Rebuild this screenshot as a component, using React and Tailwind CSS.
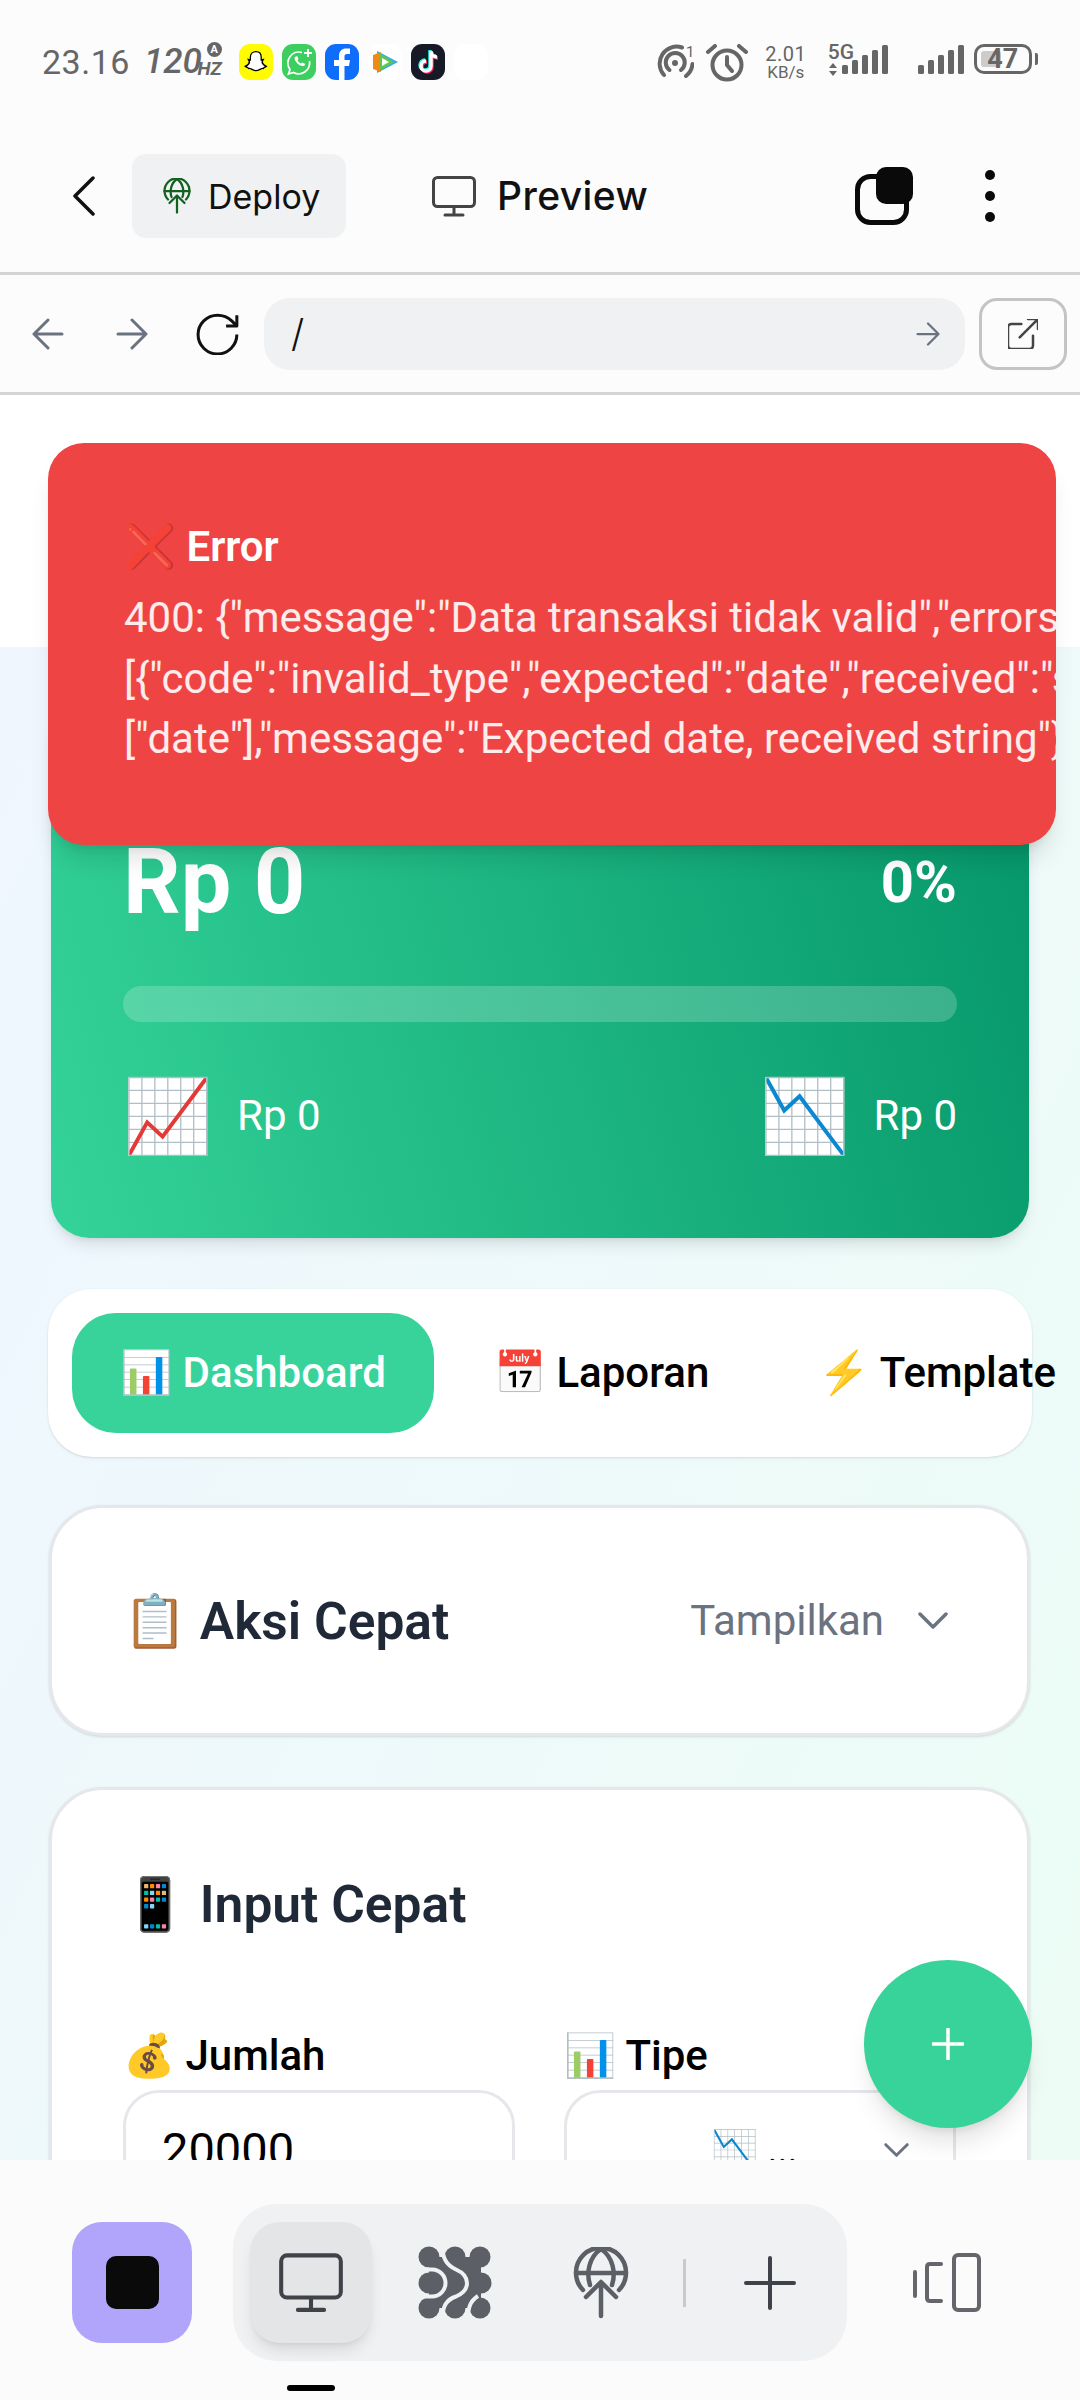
const AppTile = ({ className, children }) => (
  <div className={`flex h-[36px] w-[34px] items-center justify-center overflow-hidden rounded-[11px] ${className}`}>{children}</div>
);

const Bars = () => (
  <svg viewBox="0 0 46 30" className="h-[30px] w-[46px]" fill="#666">
    <rect x="0" y="20" width="6" height="9" rx="1.500" />
    <rect x="10" y="15" width="6" height="14" rx="1.500" />
    <rect x="20" y="10" width="6" height="19" rx="1.500" />
    <rect x="30" y="5" width="6" height="24" rx="1.500" />
    <rect x="40" y="0" width="6" height="29" rx="1.500" />
  </svg>
);

const StatusBar = () => (
  <div className="flex h-[154px] shrink-0 items-start pl-[42px] pt-[44px] text-[#666]">
    <span className="flex h-[36px] items-center text-[34px] tracking-[0.5px]">23.16</span>
    <span className="ml-[14px] flex h-[36px] items-center text-[35px] font-medium italic">120</span>
    <div className="ml-[-4px] mt-[-2px] flex w-[24px] flex-col items-end">
      <span className="flex h-[15px] w-[15px] items-center justify-center rounded-full bg-[#666] text-[11px] font-bold not-italic leading-none text-white">A</span>
      <span className="mt-[1px] text-[19px] font-bold italic leading-[22px]">HZ</span>
    </div>
    <div className="ml-[17px] flex gap-[9px]">
      <AppTile className="bg-[#fffc00]">
        <svg viewBox="0 0 30 30" className="h-[26px] w-[26px]">
          <path d="M15 3c4 0 6 3 6 6.500v3l2.500-.5-1.500 3c.5 2.500 2.500 4 5 5-1 1-3 1-3.500 2.500-3-.5-4.500 2.500-8.500 2.500s-5.500-3-8.500-2.500C5.500 21 3.500 21 2.500 20c2.500-1 4.500-2.500 5-5L6 12l2.500.5v-3C8.500 6 11 3 15 3z" fill="#fff" stroke="#000" strokeWidth="1.500" />
        </svg>
      </AppTile>
      <AppTile className="bg-[#3ccf5f]">
        <svg viewBox="0 0 34 36" className="h-[36px] w-[34px]" fill="none" stroke="#fff">
          <path d="M20 8.500A11 11 0 0 0 8 25.500L6.500 30l5-1.500A11 11 0 0 0 27.500 17" strokeWidth="1.800" />
          <path d="M13 13c-2 2 3 9 8 9 2 0 2.500-2 1.500-2.500l-2.500-1-1 1c-1.500-.5-3-2-3.500-3.500l1-1-1-2.500c-.5-.5-1.500-.5-2.500.5z" fill="#fff" stroke="none" />
          <path d="M26 5v8M22 9h8" strokeWidth="2" />
        </svg>
      </AppTile>
      <AppTile className="bg-[#0f6dfb]">
        <svg viewBox="0 0 34 36" className="h-[36px] w-[34px]">
          <path d="M14 36V22h-5v-6h5v-4c0-5 3-7.500 7-7.500h4v5.500h-3c-2 0-2.500 1-2.500 2.500V16h5.500l-1 6H19.500v14z" fill="#fff" />
        </svg>
      </AppTile>
      <AppTile className="bg-white">
        <svg viewBox="0 0 34 36" className="h-[36px] w-[34px]">
          <path d="M9 7l21 11L9 29z" fill="#34a8e8" />
          <path d="M5 11l8-3v20l-8-3z" fill="#f08a16" />
          <path d="M11 9l15 9-15 9z" fill="#5fc84a" />
          <path d="M14 14l7 4-7 4z" fill="#fff" />
        </svg>
      </AppTile>
      <AppTile className="bg-[#171a26]">
        <svg viewBox="0 0 34 36" className="h-[36px] w-[34px]" fill="none" strokeWidth="3.500">
          <path d="M20 7v15a5 5 0 1 1-5-5M20 8c.5 3 3 5 6 5" stroke="#25f4ee" transform="translate(-1 -1)" />
          <path d="M20 7v15a5 5 0 1 1-5-5M20 8c.5 3 3 5 6 5" stroke="#fe2c55" transform="translate(1 1)" />
          <path d="M20 7v15a5 5 0 1 1-5-5M20 8c.5 3 3 5 6 5" stroke="#fff" />
        </svg>
      </AppTile>
      <AppTile className="bg-white" />
    </div>

    <div className="ml-[168px] flex items-start">
      <svg viewBox="0 0 38 36" className="h-[36px] w-[38px]" fill="none" stroke="#666" strokeWidth="4" strokeLinecap="round">
        <path d="M8 31A17 17 0 0 1 26 3.500" />
        <path d="M36.500 20A17 17 0 0 1 30 32" />
        <path d="M13.500 26A9.500 9.500 0 1 1 25 26" />
        <circle cx="19" cy="19" r="3" fill="#666" stroke="none" />
        <text x="30" y="13" fontSize="15" fill="#666" stroke="none">1</text>
      </svg>
      <svg viewBox="0 0 42 38" className="ml-[12px] h-[38px] w-[42px]" fill="none" stroke="#666" strokeWidth="4" strokeLinecap="round">
        <circle cx="21" cy="21" r="14.500" />
        <path d="M21 13v8l5 6M2 8l7-6M40 8l-7-6" />
      </svg>
      <div className="ml-[17px] flex w-[42px] flex-col items-center text-[#666]">
        <span className="text-[20px] leading-[20px] tracking-[0.5px]">2.01</span>
        <span className="text-[17px] leading-[16px]">KB/s</span>
      </div>
      <div className="ml-[21px] flex w-[26px] flex-col">
        <span className="text-[21px] font-medium leading-[16px]">5G</span>
        <svg viewBox="0 0 8 13" className="ml-[1px] mt-[3px] h-[13px] w-[8px]" fill="#666">
          <path d="M4 0l4 5H0zM0 8h8l-4 5z" />
        </svg>
      </div>
      <div className="ml-[-12px] mt-[1px]"><Bars /></div>
      <div className="ml-[30px] mt-[1px]"><Bars /></div>
      <div className="relative ml-[10px] flex h-[30px] w-[58px] items-center justify-center rounded-[10px] border-[3px] border-[#666] text-[27px] font-bold leading-none">
        <div className="absolute left-[4px] top-[4px] h-[16px] w-[20px] rounded-[3px] bg-[#ccc]" />
        <span className="relative">47</span>
      </div>
      <div className="ml-[3px] mt-[9px] h-[12px] w-[3px] rounded-r-[2px] bg-[#666]" />
    </div>
  </div>
);

const MonitorIcon = ({ className, stroke, width }) => (
  <svg viewBox="0 0 44 41" className={className} fill="none" stroke={stroke} strokeWidth={width} strokeLinecap="round">
    <rect x="1.500" y="1.500" width="41" height="29" rx="4" />
    <path d="M22 31v8M13 39h18" />
  </svg>
);

const GlobeArrow = ({ className, stroke, width }) => (
  <svg viewBox="0 0 56 72" className={className} fill="none" stroke={stroke} strokeWidth={width} strokeLinecap="round" strokeLinejoin="round">
    <path d="M10 43A25 25 0 1 1 46 43" />
    <path d="M17 38C13 26 16 10 28 2c12 8 15 24 11 36M3 26h50" />
    <path d="M28 69V36M13 50l15-15 15 15" />
  </svg>
);

// dark block with eight dots round it, gaps are cut with the pill colour
const BlobIcon = () => (
  <svg viewBox="0 0 74 73" className="h-[73px] w-[74px]">
    <g fill="#5c5f66">
      <circle cx="11" cy="11" r="10.500" />
      <circle cx="37" cy="11" r="10.500" />
      <circle cx="62" cy="11" r="10.500" />
      <circle cx="11" cy="37" r="10.500" />
      <circle cx="63" cy="37" r="10.500" />
      <circle cx="11" cy="62" r="10.500" />
      <circle cx="37" cy="62" r="10.500" />
      <circle cx="62" cy="62" r="10.500" />
      <rect x="11" y="11" width="52" height="51" />
    </g>
    <g fill="none" stroke="#f0f1f3" strokeWidth="4">
      <path d="M0 23.500H14C22 23.500 27.500 30 27.500 37C27.500 44 22 50.500 14 50.500H0" />
      <path d="M24.500 0C24.500 12 28 19 38 23.500C46 27 49 32 49 37C49 43 46 47 38 50.500C28 54 24.500 60 24.500 73" />
      <path d="M50 73C50 62 52 55 60 50" />
    </g>
  </svg>
);

const Header = () => (
  <div className="flex h-[118px] shrink-0 items-start pr-[85px]">
    <div className="flex h-[84px] w-full items-center font-['Inter']">
      <svg viewBox="0 0 24 40" className="ml-[72px] h-[40px] w-[24px]" fill="none" stroke="#111" strokeWidth="3.500" strokeLinecap="round" strokeLinejoin="round">
        <path d="M21 2L3 20l18 18" />
      </svg>
      <div className="ml-[36px] flex h-[84px] w-[214px] items-center rounded-[14px] bg-[#f0f1f3] pl-[31px] text-[34px] text-[#111]">
        <GlobeArrow className="h-[36px] w-[28px]" stroke="#14601f" width="4.500" />
        <span className="ml-[17px]">Deploy</span>
      </div>
      <MonitorIcon className="ml-[86px] h-[41px] w-[44px]" stroke="#444" width="3" />
      <span className="ml-[21px] text-[39px] font-medium tracking-[0.4px] text-[#111]">Preview</span>
      <svg viewBox="0 0 58 58" className="ml-auto h-[58px] w-[58px]">
        <rect x="2.500" y="9.500" width="49" height="46" rx="13" fill="none" stroke="#0a0a0a" strokeWidth="5" />
        <rect x="21" y="0" width="37" height="37" rx="10" fill="#0a0a0a" />
      </svg>
      <svg viewBox="0 0 10 52" className="ml-[72px] h-[52px] w-[10px]" fill="#0a0a0a">
        <circle cx="5" cy="5" r="5" />
        <circle cx="5" cy="26" r="5" />
        <circle cx="5" cy="47" r="5" />
      </svg>
    </div>
  </div>
);

const Arrow = ({ className, flip }) => (
  <svg viewBox="0 0 32 32" className={className} fill="none" stroke="#6b7280" strokeWidth="3" strokeLinecap="round" strokeLinejoin="round">
    {flip ? <path d="M2 16h28M16 2l14 14-14 14" /> : <path d="M30 16H2M16 2L2 16l14 14" />}
  </svg>
);

const UrlBar = () => (
  <div className="flex h-[123px] shrink-0 items-center border-y-[3px] border-[#d4d4d4] pl-[32px]">
    <Arrow className="h-[32px] w-[32px]" />
    <Arrow className="ml-[52px] h-[32px] w-[32px]" flip />
    <svg viewBox="3 2 18.500 19.500" className="ml-[48px] h-[42px] w-[44px]" fill="none" stroke="#111" strokeWidth="1.400" strokeLinejoin="round">
      <path d="M21 12a9 9 0 1 1-9-9c2.520 0 4.930 1 6.740 2.740L21 8" />
      <path d="M21 3v5h-5" />
    </svg>
    <div className="ml-[24px] flex h-[72px] w-[701px] items-center justify-between rounded-[26px] bg-[#f0f1f3] pl-[27px] pr-[25px] font-['Inter'] text-[38px] font-light text-[#111]">
      <span>/</span>
      <Arrow className="h-[24px] w-[24px]" flip />
    </div>
    <div className="ml-[14px] flex h-[72px] w-[88px] items-center justify-center rounded-[18px] border-[3px] border-[#c4c4c4]">
      <svg viewBox="3 3 18 18" className="h-[30px] w-[30px]" fill="none" stroke="#444" strokeWidth="1.500" strokeLinecap="round" strokeLinejoin="round">
        <path d="M15 3h6v6M10 14 21 3M18 13v6a2 2 0 0 1-2 2H5a2 2 0 0 1-2-2V8a2 2 0 0 1 2-2h6" />
      </svg>
    </div>
  </div>
);

const Chevron = ({ className, stroke }) => (
  <svg viewBox="0 0 30 17" className={className} fill="none" stroke={stroke} strokeWidth="3.500" strokeLinecap="round" strokeLinejoin="round">
    <path d="M2 2l13 13L28 2" />
  </svg>
);

const Stat = ({ emoji }) => (
  <div className="flex h-[78px] items-center">
    <span className="text-[72px] leading-none">{emoji}</span>
    <span className="ml-[24px] mt-[-4px] text-[42px]">Rp 0</span>
  </div>
);

const WebView = () => (
  <div className="relative flex-1 overflow-hidden">
    <div className="h-[252px] bg-white" />
    <div className="h-[1600px] bg-[linear-gradient(115deg,#eff6ff,#ecfdf5)] px-[48px] pt-[53px]">
      {/* saldo card */}
      <div className="mx-[3px] h-[538px] rounded-[38px] bg-[linear-gradient(75deg,#34d399,#059669)] px-[72px] pt-[128px] text-white shadow-lg">
        <div className="flex h-[108px] items-center justify-between">
          <span className="text-[90px] font-bold">Rp 0</span>
          <span className="text-[58px] font-bold">0%</span>
        </div>
        <div className="mt-[50px] h-[36px] rounded-full bg-white/20" />
        <div className="mt-[56px] flex justify-between">
          <Stat emoji="📈" />
          <Stat emoji="📉" />
        </div>
      </div>

      {/* tabs */}
      <div className="mt-[51px] flex h-[168px] w-[984px] items-center whitespace-nowrap rounded-[44px] bg-white pb-[1px] pl-[24px] text-[42px] font-medium text-black shadow-sm">
        <div className="flex h-[120px] w-[362px] shrink-0 items-center justify-center rounded-[44px] bg-[#38d39a] text-white">📊 Dashboard</div>
        <span className="ml-[60px] shrink-0">📅 Laporan</span>
        <span className="ml-[109px] shrink-0">⚡ Template</span>
      </div>

      {/* aksi cepat */}
      <div className="ml-[1px] mr-[2px] mt-[48px] flex h-[231px] items-center justify-between rounded-[54px] border-[3px] border-[#e5e7eb] bg-white pl-[71px] pr-[79px] shadow-sm">
        <span className="mt-[3px] text-[51.500px] font-semibold text-[#1f2937]">📋 Aksi Cepat</span>
        <div className="flex items-center">
          <span className="text-[42px] text-[#6b7280]">Tampilkan</span>
          <Chevron className="ml-[34px] h-[17px] w-[30px]" stroke="#6b7280" />
        </div>
      </div>

      {/* input cepat */}
      <div className="ml-[1px] mr-[2px] mt-[51px] h-[600px] rounded-[54px] border-[3px] border-[#e5e7eb] bg-white px-[71px] pt-[85px] shadow-sm">
        <div className="h-[60px] text-[51.500px] font-semibold leading-[60px] text-[#1f2937]">📱 Input Cepat</div>
        <div className="mt-[97px] grid grid-cols-2 gap-x-[49px]">
          <div>
            <div className="h-[58px] text-[42px] font-medium leading-[48px] text-black">💰 Jumlah</div>
            <div className="flex h-[120px] items-center rounded-[36px] border-[3px] border-[#e5e7eb] pl-[36px] text-[47px] text-black">20000</div>
          </div>
          <div>
            <div className="h-[58px] text-[42px] font-medium leading-[48px] text-black">📊 Tipe</div>
            <div className="flex h-[120px] items-center rounded-[36px] border-[3px] border-[#e5e7eb] pl-[144px] pr-[44px] text-[38px] text-black">
              <span>📉 ...</span>
              <Chevron className="ml-auto h-[14px] w-[25px]" stroke="#6b7280" />
            </div>
          </div>
        </div>
      </div>
    </div>

    {/* error toast */}
    <div className="absolute left-[48px] top-[48px] h-[402px] w-[1008px] overflow-hidden rounded-[36px] bg-[#ef4444] pl-[76px] pt-[76px] text-white shadow-xl">
      <div className="h-[56px] text-[42px] font-semibold leading-[56px]">❌ Error</div>
      <div className="mt-[13px] whitespace-nowrap text-[42px] leading-[60.500px] text-white/90">
        <div>{'400: {"message":"Data transaksi tidak valid","errors":'}</div>
        <div>{'[{"code":"invalid_type","expected":"date","received":"string","path":'}</div>
        <div>{'["date"],"message":"Expected date, received string"}]}'}</div>
      </div>
    </div>

    {/* fab */}
    <div className="absolute left-[864px] top-[1565px] flex h-[168px] w-[168px] items-center justify-center rounded-full bg-[#38d39a] shadow-xl">
      <svg viewBox="0 0 32 32" className="h-[32px] w-[32px]" fill="none" stroke="#fff" strokeWidth="3.500" strokeLinecap="round">
        <path d="M16 1v30M1 16h30" />
      </svg>
    </div>
  </div>
);

const BottomNav = () => (
  <div className="h-[240px] shrink-0 bg-[#fbfbfb] pt-[44px]">
    <div className="flex h-[157px] items-center pl-[72px]">
      <div className="flex h-[121px] w-[120px] items-center justify-center rounded-[30px] bg-[#b1a4fb]">
        <div className="h-[53px] w-[53px] rounded-[10px] bg-[#0a0a0a]" />
      </div>
      <div className="ml-[41px] flex h-[157px] w-[614px] items-center rounded-[44px] bg-[#f0f1f3] pl-[17px]">
        <div className="flex h-[121px] w-[122px] items-center justify-center rounded-[30px] bg-[#e4e5e7] shadow-lg">
          <MonitorIcon className="h-[60px] w-[64px]" stroke="#3f4248" width="2.800" />
        </div>
        <div className="ml-[46px]"><BlobIcon /></div>
        <GlobeArrow className="ml-[81px] h-[72px] w-[56px]" stroke="#5c5f66" width="4.500" />
        <div className="ml-[54px] h-[48px] w-[3px] bg-[#c9cacc]" />
        <svg viewBox="0 0 52 54" className="ml-[58px] h-[54px] w-[52px]" fill="none" stroke="#3f4248" strokeWidth="4" strokeLinecap="round">
          <path d="M26 2v50M2 27h48" />
        </svg>
      </div>
      <svg viewBox="0 0 68 59" className="ml-[66px] h-[59px] w-[68px]" fill="none" stroke="#64666b" strokeWidth="4" strokeLinecap="round" strokeLinejoin="round">
        <rect x="41" y="2" width="25" height="55" rx="4" />
        <path d="M28 11H17c-2 0-3 1-3 3v31c0 2 1 3 3 3h11M2 19v24" />
      </svg>
    </div>
    <div className="ml-[287px] mt-[24px] h-[6px] w-[48px] rounded-full bg-black" />
  </div>
);

export default function App() {
  return (
    <div className="flex h-[2400px] w-[1080px] flex-col overflow-hidden bg-[#fcfcfc] font-['Roboto',sans-serif]">
      <StatusBar />
      <Header />
      <UrlBar />
      <WebView />
      <BottomNav />
    </div>
  );
}
